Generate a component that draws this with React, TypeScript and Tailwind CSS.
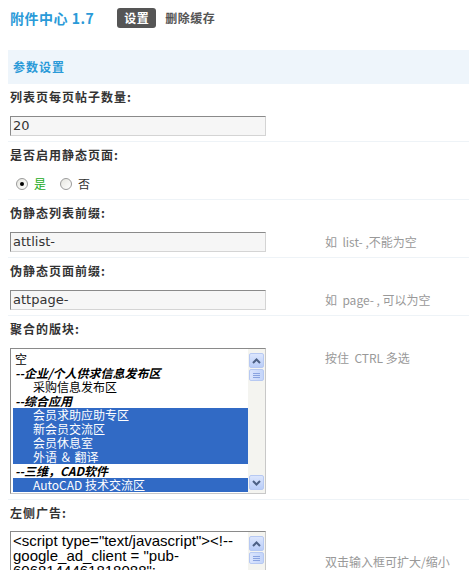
import React from "react";

const CJK = '"Noto Sans CJK SC", "DejaVu Sans", sans-serif';
const LAT = '"DejaVu Sans", "Noto Sans CJK SC", sans-serif';

function Label({ children }: { children: React.ReactNode }) {
  return (
    <div className="h-[26px] flex items-center pl-[2px] text-[12px] font-bold text-[#333] tracking-[1px]">
      {children}
    </div>
  );
}

function Desc({ children }: { children: React.ReactNode }) {
  return (
    <div className="h-[20px] flex items-center text-[12px] text-[#999] pl-[10px] whitespace-pre">
      {children}
    </div>
  );
}

function TextInput({ value }: { value: string }) {
  return (
    <div
      className="w-[256px] h-[20px] bg-[#f6f6f6] border border-t-[#8a8a8a] border-l-[#8a8a8a] border-r-[#d4d4d4] border-b-[#d4d4d4] flex items-center pl-[2px] text-[13px] text-[#333]"
      style={{ fontFamily: LAT }}
    >
      {value}
    </div>
  );
}

function Scrollbar({ height }: { height: number }) {
  return (
    <div className="w-[17px] shrink-0 flex flex-col bg-[#f4f4f0] pt-[4px] px-[1px]" style={{ height }}>
      <div className="h-[15px] rounded-[2px] border border-[#b7c9f2] bg-gradient-to-b from-[#dce6fd] to-[#b9cdf8] flex items-center justify-center">
        <svg width="9" height="6" viewBox="0 0 9 6">
          <path d="M1 5 L4.5 1.5 L8 5" stroke="#4d6185" strokeWidth="2" fill="none" />
        </svg>
      </div>
      <div className="mt-[1px] h-[12px] rounded-[2px] border border-[#b7c9f2] bg-gradient-to-r from-[#dbe5fd] to-[#c4d5fa] flex flex-col items-center justify-center gap-[1px]">
        <div className="w-[7px] h-[1px] bg-[#8aa3e0]" />
        <div className="w-[7px] h-[1px] bg-[#8aa3e0]" />
        <div className="w-[7px] h-[1px] bg-[#8aa3e0]" />
      </div>
      <div className="flex-1" />
      <div className="h-[15px] mb-[3px] rounded-[2px] border border-[#b7c9f2] bg-gradient-to-b from-[#dce6fd] to-[#b9cdf8] flex items-center justify-center">
        <svg width="9" height="6" viewBox="0 0 9 6">
          <path d="M1 1 L4.5 4.5 L8 1" stroke="#4d6185" strokeWidth="2" fill="none" />
        </svg>
      </div>
    </div>
  );
}

type Opt = { t: string; g?: boolean; sel?: boolean; ind?: boolean };

const options: Opt[] = [
  { t: "空" },
  { t: "--企业/个人供求信息发布区", g: true },
  { t: "采购信息发布区", ind: true },
  { t: "--综合应用", g: true },
  { t: "会员求助应助专区", ind: true, sel: true },
  { t: "新会员交流区", ind: true, sel: true },
  { t: "会员休息室", ind: true, sel: true },
  { t: "外语 ＆ 翻译", ind: true, sel: true },
  { t: "--三维，CAD软件", g: true },
  { t: "AutoCAD 技术交流区", ind: true, sel: true },
];

function Row({
  label,
  children,
  desc,
}: {
  label: string;
  children: React.ReactNode;
  desc?: string;
}) {
  return (
    <div className="border-b border-[#eef3f7]">
      <Label>{label}</Label>
      <div className="flex items-start pt-[6px] pb-[5px] pl-[2px]">
        <div className="w-[305px] shrink-0">{children}</div>
        {desc && <Desc>{desc}</Desc>}
      </div>
    </div>
  );
}

export default function App() {
  return (
    <div className="w-[469px] h-[570px] overflow-hidden bg-white" style={{ fontFamily: CJK }}>
      <div className="flex items-center h-[20px] mt-[8px] pl-[10px]">
        <span className="text-[14px] font-bold text-[#2a9ad8] tracking-[0.5px]">附件中心 1.7</span>
        <span className="ml-[23px] h-[20px] px-[7px] rounded-[3px] bg-[#555] text-white text-[12px] font-bold flex items-center tracking-[0.5px]">
          设置
        </span>
        <span className="ml-[9px] text-[12px] font-bold text-[#555] tracking-[0.5px]">删除缓存</span>
      </div>

      <div className="ml-[8px] mt-[22px]">
        <div className="h-[34px] bg-[#eef5fb] flex items-center pl-[5px] text-[12px] font-bold text-[#2a9ad8] tracking-[1px]">
          参数设置
        </div>

        <Row label="列表页每页帖子数量:">
          <TextInput value="20" />
        </Row>

        <Row label="是否启用静态页面:">
          <div className="h-[20px] flex items-center text-[12px]">
            <span className="ml-[6px] w-[12px] h-[12px] rounded-full border border-[#9a9a9a] bg-gradient-to-br from-[#e6e6e0] to-white flex items-center justify-center">
              <span className="w-[4px] h-[4px] rounded-full bg-black" />
            </span>
            <span className="ml-[6px] text-[#22aa22]">是</span>
            <span className="ml-[14px] w-[12px] h-[12px] rounded-full border border-[#9a9a9a] bg-gradient-to-br from-[#e6e6e0] to-white" />
            <span className="ml-[6px] text-[#333]">否</span>
          </div>
        </Row>

        <Row label="伪静态列表前缀:" desc="如  list- ,不能为空">
          <TextInput value="attlist-" />
        </Row>

        <Row label="伪静态页面前缀:" desc="如  page- , 可以为空">
          <TextInput value="attpage-" />
        </Row>

        <Row label="聚合的版块:" desc="按住  CTRL 多选">
          <div className="w-[256px] h-[146px] border border-t-[#8a8a8a] border-l-[#8a8a8a] border-r-[#c8c8c8] border-b-[#c8c8c8] flex bg-white overflow-hidden">
            <div className="flex-1 pt-[3px] pl-[2px] overflow-hidden">
              {options.map((o, i) => (
                <div
                  key={i}
                  className={
                    "h-[14px] leading-[14px] whitespace-nowrap text-[12px] " +
                    (o.sel ? "bg-[#316ac5] text-white " : "text-black ") +
                    (o.g ? "italic font-bold " : "") +
                    (o.ind ? "pl-[20px]" : "pl-[2px]")
                  }
                >
                  {o.t}
                </div>
              ))}
            </div>
            <Scrollbar height={144} />
          </div>
        </Row>

        <div>
          <Label>左侧广告:</Label>
          <div className="flex items-start pt-[5px] pl-[2px]">
            <div className="w-[305px] shrink-0">
              <div className="w-[256px] h-[60px] border border-t-[#8a8a8a] border-l-[#8a8a8a] border-r-[#c8c8c8] flex bg-white overflow-hidden">
                <div
                  className="flex-1 pt-[1px] pl-[2px] text-[15px] leading-[15px] text-black whitespace-pre overflow-hidden"
                  style={{ fontFamily: '"Liberation Sans", Arial, sans-serif' }}
                >
                  {'<script type="text/javascript"><!--\ngoogle_ad_client = "pub-\n6068144461818088";'}
                </div>
                <Scrollbar height={60} />
              </div>
            </div>
            <div className="pt-[21px]">
              <Desc>双击输入框可扩大/缩小</Desc>
            </div>
          </div>
        </div>
      </div>
    </div>
  );
}
